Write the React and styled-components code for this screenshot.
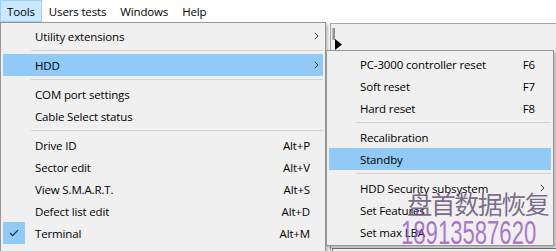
import React from 'react';
import styled, { createGlobalStyle } from 'styled-components';

const GlobalStyle = createGlobalStyle`
  html, body {
    margin: 0;
    padding: 0;
  }
  body {
    width: 556px;
    height: 251px;
    overflow: hidden;
    background: #fff;
    font-family: "Open Sans", "Noto Sans", sans-serif;
    font-size: 11.5px;
    letter-spacing: -0.15px;
    color: #000;
  }
`;

const Screen = styled.div`
  position: relative;
  width: 556px;
  height: 251px;
  overflow: hidden;
  display: flex;
  flex-direction: column;
`;

const MenuBar = styled.div`
  height: 22px;
  display: flex;
  background: #fff;
  flex-shrink: 0;
`;

const MenuTitle = styled.div`
  display: flex;
  align-items: center;
  padding: 0 6px;
  border: 1px solid ${props => props.$active ? '#99d1ff' : 'transparent'};
  background: ${props => props.$active ? '#cce8ff' : 'transparent'};
`;

const Workspace = styled.div`
  flex: 1;
  position: relative;
  background: #fff;
`;

const BackWindow = styled.div`
  position: absolute;
  left: 330px;
  top: 1px;
  right: 0;
  bottom: 0;
  background: #f0f0f0;
  border-top: 1px solid #a7a7a7;
  border-left: 1px solid #a7a7a7;
`;

const Thumb = styled.div`
  position: absolute;
  left: 1px;
  top: 4px;
  width: 3px;
  height: 12px;
  background: linear-gradient(90deg, #c4c4c4, #7c7c7c);
`;

const Pointer = styled.svg`
  position: absolute;
  left: 4px;
  top: 15px;
`;

const LowerPane = styled.div`
  position: absolute;
  left: 1px;
  right: 0;
  top: 224px;
  height: 20px;
  background: #f7f7f7;
  border-top: 1px solid #777;
  border-left: 1px solid #777;
`;

const Menu = styled.div`
  position: absolute;
  left: ${props => props.$left}px;
  top: ${props => props.$top}px;
  width: ${props => props.$width}px;
  box-sizing: border-box;
  padding: 2px;
  background: #f0f0f0;
  border: 1px solid #979797;
  box-shadow: 2px 2px 3px rgba(0, 0, 0, 0.28);
`;

const Item = styled.div`
  height: 22px;
  display: flex;
  align-items: center;
  background: ${props => props.$hot ? '#91c9f7' : 'transparent'};
  white-space: nowrap;
`;

const Gutter = styled.div`
  width: ${props => props.$w}px;
  height: 22px;
  flex-shrink: 0;
  display: flex;
`;

const CheckBox = styled.div`
  width: 22px;
  height: 22px;
  background: #91c9f7;
  display: flex;
  align-items: center;
  justify-content: center;
`;

const Label = styled.span`
  flex: 1;
`;

const Shortcut = styled.span`
  text-align: right;
`;

const Tail = styled.div`
  width: ${props => props.$w}px;
  flex-shrink: 0;
  display: flex;
  align-items: center;
  padding-left: ${props => props.$arrowAt}px;
  box-sizing: border-box;
`;

const Separator = styled.div`
  height: 7px;
  display: flex;
  align-items: center;
  padding-left: ${props => props.$inset}px;

  &::after {
    content: '';
    flex: 1;
    height: 1px;
    background: #d2d2d2;
  }
`;

const WatermarkCn = styled.div`
  position: absolute;
  left: 408px;
  top: 191px;
  width: 148px;
  display: flex;
  font-family: "Noto Sans CJK SC", "Noto Sans CJK JP", sans-serif;
  font-size: 25px;
  line-height: 1;
  letter-spacing: 0;
  color: rgba(100, 85, 120, 0.85);
  pointer-events: none;
`;

const CnChar = styled.span`
  width: 23.5px;
  flex-shrink: 0;
  display: flex;
  justify-content: center;
`;

const WatermarkNum = styled.div`
  position: absolute;
  left: 401px;
  top: 216px;
  font-family: "Liberation Sans", sans-serif;
  font-size: 33px;
  line-height: 1;
  letter-spacing: 0;
  color: rgba(150, 85, 200, 0.8);
  transform: scaleX(0.67);
  transform-origin: left top;
  pointer-events: none;
`;

const Chevron = () => (
  <svg width="5" height="8" viewBox="0 0 5 8">
    <path d="M0.8 0.8 L4 4 L0.8 7.2" fill="none" stroke="#3a3a3a" strokeWidth="1" />
  </svg>
);

const Tick = () => (
  <svg width="10" height="8" viewBox="0 0 10 8">
    <path d="M1 4 L3.6 6.6 L9 1.2" fill="none" stroke="#1e2a3a" strokeWidth="1.2" />
  </svg>
);

const toolsItems = [
  { label: 'Utility extensions', sub: true },
  { sep: true },
  { label: 'HDD', sub: true, hot: true },
  { sep: true },
  { label: 'COM port settings' },
  { label: 'Cable Select status' },
  { sep: true },
  { label: 'Drive ID', key: 'Alt+P' },
  { label: 'Sector edit', key: 'Alt+V' },
  { label: 'View S.M.A.R.T.', key: 'Alt+S' },
  { label: 'Defect list edit', key: 'Alt+D' },
  { label: 'Terminal', key: 'Alt+M', checked: true },
  { label: 'Results', key: 'Alt+R' },
];

const hddItems = [
  { label: 'PC-3000 controller reset', key: 'F6' },
  { label: 'Soft reset', key: 'F7' },
  { label: 'Hard reset', key: 'F8' },
  { sep: true },
  { label: 'Recalibration' },
  { label: 'Standby', hot: true },
  { sep: true },
  { label: 'HDD Security subsystem', sub: true },
  { label: 'Set Features' },
  { label: 'Set max LBA' },
];

const PopupMenu = ({ items, left, top, width, gutter, tail, arrowAt, sepInset }) => (
  <Menu $left={left} $top={top} $width={width}>
    {items.map((it, i) =>
      it.sep ? (
        <Separator key={i} $inset={sepInset} />
      ) : (
        <Item key={i} $hot={it.hot}>
          <Gutter $w={gutter}>
            {it.checked && <CheckBox><Tick /></CheckBox>}
          </Gutter>
          <Label>{it.label}</Label>
          {it.key && <Shortcut>{it.key}</Shortcut>}
          <Tail $w={tail} $arrowAt={arrowAt}>{it.sub && <Chevron />}</Tail>
        </Item>
      )
    )}
  </Menu>
);

export default function App() {
  return (
    <Screen>
      <GlobalStyle />
      <MenuBar>
        <MenuTitle $active>Tools</MenuTitle>
        <MenuTitle>Users tests</MenuTitle>
        <MenuTitle>Windows</MenuTitle>
        <MenuTitle>Help</MenuTitle>
      </MenuBar>
      <Workspace>
        <BackWindow>
          <Thumb />
          <Pointer width="7" height="11" viewBox="0 0 7 11">
            <path d="M0 0 L7 5.5 L0 11 Z" fill="#000" />
          </Pointer>
          <LowerPane />
        </BackWindow>
        <PopupMenu
          items={toolsItems}
          left={0}
          top={0}
          width={326}
          gutter={32}
          tail={13}
          arrowAt={4}
          sepInset={28}
        />
        <PopupMenu
          items={hddItems}
          left={326}
          top={28}
          width={228}
          gutter={31}
          tail={16}
          arrowAt={5}
          sepInset={27}
        />
      </Workspace>
      <WatermarkCn>
        {'盘首数据恢复'.split('').map((ch, i) => <CnChar key={i}>{ch}</CnChar>)}
      </WatermarkCn>
      <WatermarkNum>18913587620</WatermarkNum>
    </Screen>
  );
}
